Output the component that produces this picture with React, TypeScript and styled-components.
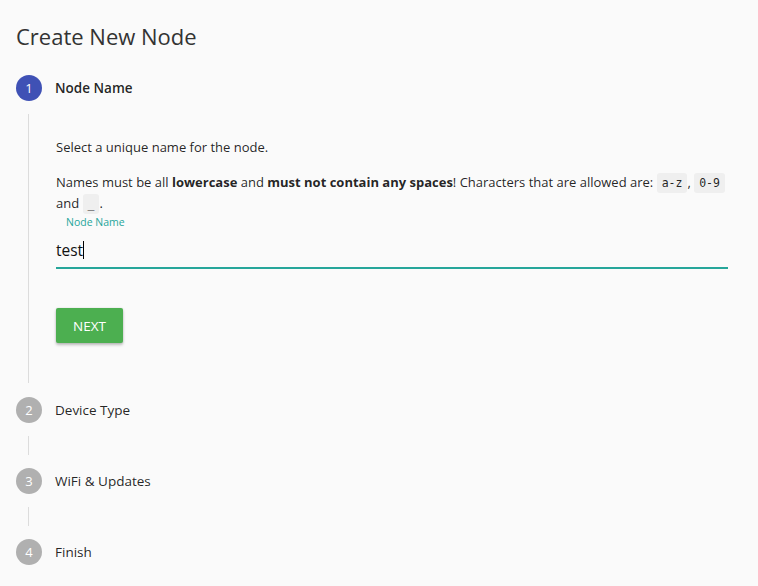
import * as React from "react";
import styled, { createGlobalStyle } from "styled-components";

const GlobalStyle = createGlobalStyle`
    html, body {
        margin: 0;
        padding: 0;
        background-color: #fafafa;
    }
    body {
        font-family: "Open Sans", "Noto Sans", sans-serif;
        color: rgba(0, 0, 0, 0.87);
    }
`;

const Page = styled.div`
    padding: 0 30px 0 16px;
    box-sizing: border-box;
    width: 758px;
`;

const Title = styled.h1`
    margin: 0;
    padding-top: 21px;
    font-size: 22px;
    font-weight: 400;
    line-height: 30px;
    color: #333;
`;

const Stepper = styled.div`
    display: flex;
    flex-direction: column;
    padding-top: 24px;
`;

const Step = styled.div`
    display: flex;
    flex-direction: column;
`;

const StepHeader = styled.div`
    display: flex;
    align-items: center;
    gap: 13px;
    height: 26px;
`;

const StepIcon = styled.div<{ $active?: boolean }>`
    width: 26px;
    height: 26px;
    border-radius: 50%;
    background-color: ${p => (p.$active ? "#3f51b5" : "#b0b0b0")};
    color: #fff;
    font-size: 13px;
    display: flex;
    align-items: center;
    justify-content: center;
`;

const StepLabel = styled.span<{ $active?: boolean }>`
    font-size: 13.5px;
    font-weight: ${p => (p.$active ? 600 : 400)};
    color: rgba(0, 0, 0, 0.87);
`;

const Connector = styled.div<{ $open?: boolean }>`
    margin: 13px 0 ${p => (p.$open ? "14px" : "13px")} 12px;
    border-left: 1px solid #dcdcdc;
    min-height: 19px;
    padding: ${p => (p.$open ? "23px 0 40px 27px" : "0")};
`;

const Text = styled.p`
    margin: 0 0 14px 0;
    font-size: 13px;
    line-height: 21px;
    color: rgba(0, 0, 0, 0.87);
`;

const Code = styled.code`
    font-family: "DejaVu Sans Mono", monospace;
    font-size: 11.5px;
    line-height: 1;
    background-color: #efefef;
    border-radius: 3px;
    padding: 3px 5px;
`;

const Field = styled.div`
    margin-top: -14px;
    display: flex;
    flex-direction: column;
`;

const FieldLabel = styled.label`
    font-size: 10.5px;
    color: #26a69a;
    padding-left: 10px;
    line-height: 16px;
`;

const FieldValue = styled.div`
    font-size: 15.5px;
    line-height: 22px;
    padding: 9px 0 6px 0;
    border-bottom: 2px solid #26a69a;
    color: #111;
`;

const Caret = styled.span`
    display: inline-block;
    width: 1px;
    height: 18px;
    background: #000;
    vertical-align: -3px;
`;

const NextButton = styled.button`
    margin-top: 39px;
    width: 67px;
    height: 35px;
    border: none;
    border-radius: 2px;
    background-color: #4caf50;
    color: #fff;
    font-family: "Open Sans", sans-serif;
    font-size: 13.5px;
    font-weight: 500;
    text-transform: uppercase;
    box-shadow: 0 2px 3px rgba(0, 0, 0, 0.25), 0 0 2px rgba(0, 0, 0, 0.12);
    cursor: pointer;
`;

const steps = ["Node Name", "Device Type", "WiFi & Updates", "Finish"];

export default function App() {
    const active = 0;
    return (
        <Page>
            <GlobalStyle />
            <Title>Create New Node</Title>
            <Stepper>
                {steps.map((label, i) => (
                    <Step key={label}>
                        <StepHeader>
                            <StepIcon $active={i === active}>{i + 1}</StepIcon>
                            <StepLabel $active={i === active}>{label}</StepLabel>
                        </StepHeader>
                        {i === active && (
                            <Connector $open>
                                <Text>Select a unique name for the node.</Text>
                                <Text>
                                    Names must be all <b>lowercase</b> and <b>must not contain any spaces</b>!
                                    Characters that are allowed are: <Code>a-z</Code>, <Code>0-9</Code> and{" "}
                                    <Code>_</Code>.
                                </Text>
                                <Field>
                                    <FieldLabel>Node Name</FieldLabel>
                                    <FieldValue>
                                        test<Caret />
                                    </FieldValue>
                                </Field>
                                <NextButton>Next</NextButton>
                            </Connector>
                        )}
                        {i !== active && i < steps.length - 1 && <Connector />}
                    </Step>
                ))}
            </Stepper>
        </Page>
    );
}
